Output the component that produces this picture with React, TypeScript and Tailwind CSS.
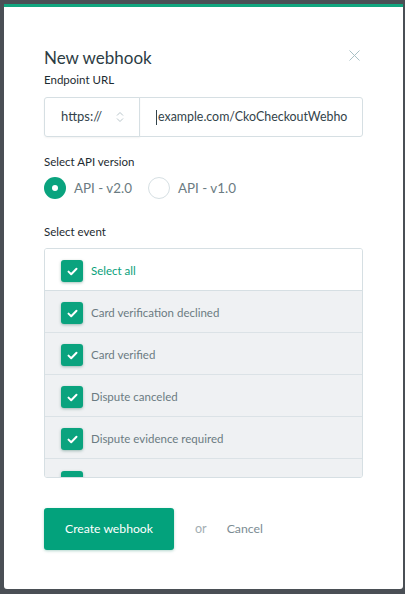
import { useState } from "react";

const EVENTS = [
  "Card verification declined",
  "Card verified",
  "Dispute canceled",
  "Dispute evidence required",
];

function Check() {
  return (
    <span className="flex h-[22px] w-[22px] shrink-0 items-center justify-center rounded-[3px] bg-[#0aa37e] shadow-[0_1px_3px_rgba(0,80,60,0.35)]">
      <svg width="11" height="9" viewBox="0 0 11 9" fill="none">
        <path d="M1.5 4.6L4.2 7.2L9.5 1.8" stroke="white" strokeWidth="2" strokeLinecap="round" strokeLinejoin="round" />
      </svg>
    </span>
  );
}

export default function App() {
  const [version, setVersion] = useState("v2");

  return (
    <div className="h-[594px] w-[405px] overflow-hidden bg-[#4a4f55] pl-1 pr-[2px] pt-1 font-['Lato','Noto_Sans',sans-serif]">
      <div className="flex h-[585px] flex-col rounded-b-[3px] bg-white">
        <div className="h-[3px] bg-[#12a67f]" />

        <div className="flex flex-col px-10 pt-[39px]">
          {/* header */}
          <div className="flex items-start justify-between">
            <h1 className="text-[17px] leading-6 text-[#2c3c44]">New webhook</h1>
            <button className="mr-[3px] mt-[4px] flex text-[#a9c1c5]">
              <svg width="11" height="11" viewBox="0 0 11 11" fill="none">
                <path d="M0.5 0.5L10.5 10.5M10.5 0.5L0.5 10.5" stroke="currentColor" strokeWidth="1" />
              </svg>
            </button>
          </div>

          <label className="mt-[2px] text-[11.5px] leading-4 text-[#1d2b31]">Endpoint URL</label>
          <div className="mt-[9px] flex h-10">
            <div className="flex w-[96px] items-center justify-between rounded-l-[3px] border border-[#d6dfe3] pl-4 pr-[15px] shadow-[0_1px_2px_rgba(0,0,0,0.05)]">
              <span className="text-[13px] text-[#33434a]">https://</span>
              <svg width="8" height="12" viewBox="0 0 8 12" fill="none">
                <path d="M1 4.5L4 1.5L7 4.5M1 7.5L4 10.5L7 7.5" stroke="#b9c6cb" strokeWidth="1" />
              </svg>
            </div>
            <div className="-ml-px flex flex-1 items-center rounded-r-[3px] border border-[#d6dfe3] pl-4 text-[12.4px] text-[#33434a]">
              <span className="mr-px h-[15px] w-px bg-[#33434a]" />
              example.com/CkoCheckoutWebho
            </div>
          </div>

          <label className="mt-[17px] text-[11.5px] leading-4 text-[#1d2b31]">Select API version</label>
          <div className="mt-[7px] flex items-center">
            <button onClick={() => setVersion("v2")} className="flex items-center">
              <span className={`flex h-[22px] w-[22px] items-center justify-center rounded-full ${version === "v2" ? "bg-[#0aa37e]" : "border border-[#d6dfe3]"}`}>
                {version === "v2" && <span className="h-[6px] w-[6px] rounded-full bg-white" />}
              </span>
              <span className="ml-[8px] text-[13.4px] text-[#6b7b82]">API - v2.0</span>
            </button>
            <button onClick={() => setVersion("v1")} className="ml-[16px] flex items-center">
              <span className={`flex h-[22px] w-[22px] items-center justify-center rounded-full ${version === "v1" ? "bg-[#0aa37e]" : "border border-[#d6dfe3]"}`}>
                {version === "v1" && <span className="h-[6px] w-[6px] rounded-full bg-white" />}
              </span>
              <span className="ml-[8px] text-[13.4px] text-[#6b7b82]">API - v1.0</span>
            </button>
          </div>

          <label className="mt-[25px] text-[11.5px] leading-4 text-[#1d2b31]">Select event</label>
          <div className="mt-[8px] h-[230px] overflow-hidden rounded-[3px] border border-[#d6dfe3]">
            <div className="flex h-[42px] items-center border-b border-[#d6dfe3] bg-white pl-4 pt-[3px]">
              <Check />
              <span className="ml-2 text-[11.5px] text-[#0a9f7b]">Select all</span>
            </div>
            {EVENTS.map((e) => (
              <div key={e} className="flex h-[42px] items-center border-b border-[#dbe2e6] bg-[#eff1f3] pl-4 pt-[3px]">
                <Check />
                <span className="ml-2 text-[11.5px] text-[#6b7b82]">{e}</span>
              </div>
            ))}
            <div className="flex h-[42px] items-center bg-[#eff1f3] pl-4 pt-[3px]">
              <Check />
            </div>
          </div>

          <div className="mt-[30px] flex items-center">
            <button className="h-[42px] w-[130px] rounded-[3px] bg-[#03a27c] text-[12.2px] text-white shadow-[0_1px_3px_rgba(0,120,90,0.3)]">
              Create webhook
            </button>
            <span className="ml-[21px] text-[12.5px] text-[#a3aeb3]">or</span>
            <button className="ml-[20px] text-[12.3px] text-[#7c8c93]">Cancel</button>
          </div>
        </div>
      </div>
    </div>
  );
}
